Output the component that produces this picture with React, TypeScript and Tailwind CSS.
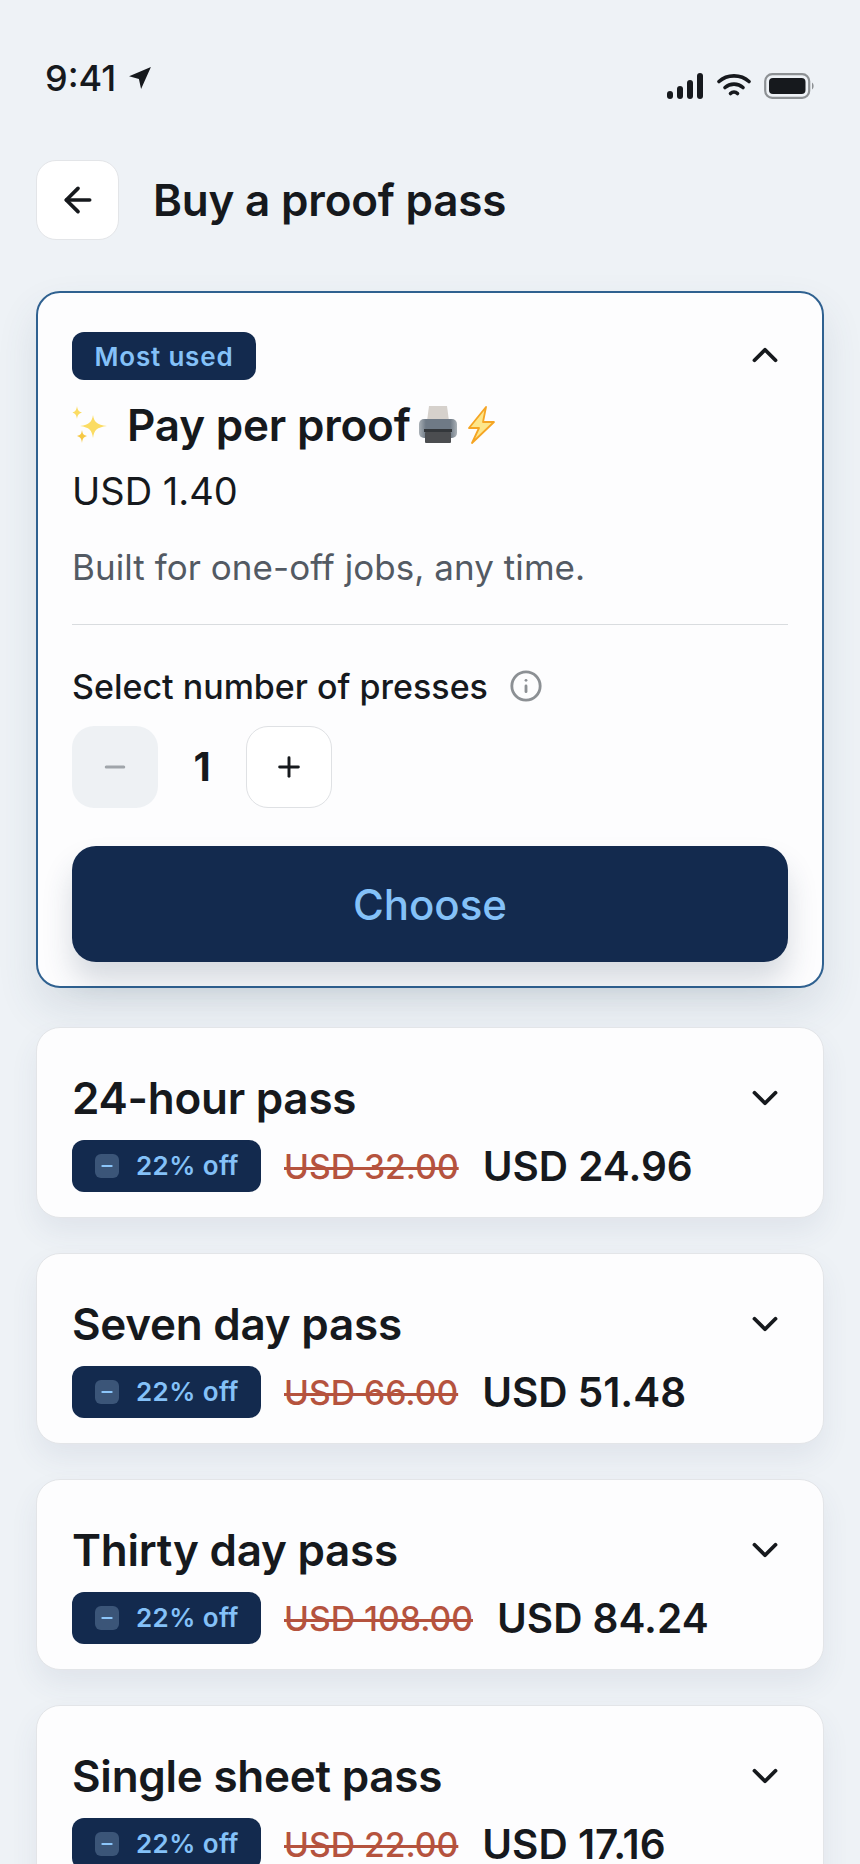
import { ArrowLeft, ChevronDown, ChevronUp, Info, Minus, Plus } from 'lucide-react';

const passes = [
  { name: '24-hour pass', was: 'USD 32.00', now: 'USD 24.96' },
  { name: 'Seven day pass', was: 'USD 66.00', now: 'USD 51.48' },
  { name: 'Thirty day pass', was: 'USD 108.00', now: 'USD 84.24' },
  { name: 'Single sheet pass', was: 'USD 22.00', now: 'USD 17.16' },
];

function StatusIcons() {
  return (
    <div className="flex items-end gap-[13px] mt-[18px]">
      <svg width="37" height="26" viewBox="0 0 37 26" fill="#16191d">
        <rect x="0" y="18" width="6" height="8" rx="3" />
        <rect x="10" y="13" width="6" height="13" rx="3" />
        <rect x="20" y="7" width="6" height="19" rx="3" />
        <rect x="30" y="0" width="6" height="26" rx="3" />
      </svg>
      <svg className="mb-[2px]" width="34" height="24" viewBox="0 0 34 24" fill="none" stroke="#16191d" strokeLinecap="round" strokeWidth="3.6">
        <path d="M2 8.5C10 1 24 1 32 8.5" />
        <path d="M8 14.5C13 10 21 10 26 14.5" />
        <path d="M13.5 20.5C15.5 18.5 18.5 18.5 20.5 20.5" />
      </svg>
      <svg width="50" height="26" viewBox="0 0 50 26" fill="none">
        <rect x="1.2" y="1.2" width="44" height="23.6" rx="7" stroke="#8d9194" strokeWidth="2.2" />
        <rect x="5" y="5" width="36.5" height="16" rx="4" fill="#16191d" />
        <path d="M48 9.5c1.2.8 1.6 2 1.6 3.5s-.4 2.7-1.6 3.5z" fill="#8d9194" />
      </svg>
    </div>
  );
}

function Sparkles() {
  return (
    <svg width="36" height="38" viewBox="0 0 36 38" fill="#fbdc63">
      <path d="M21 9c1.2 7 3.5 9.500 14 11-10.500 1.500-12.800 4-14 12-1.200-8-3.500-10.500-13-12 9.500-1.500 11.800-4 13-11z" />
      <path d="M5 0c.6 4 1.500 5.500 5 6.500-3.500 1-4.400 2.500-5 6.500-.6-4-1.500-5.500-4.500-6.500C3.500 5.500 4.400 4 5 0z" />
      <path d="M10 24c.6 4 1.500 5 5 6-3.500 1-4.400 2.500-5 7-.6-4.500-1.500-6-5-7 3.500-1 4.400-2 5-6z" fill="#f6c844" />
    </svg>
  );
}

function Printer() {
  return (
    <svg width="38" height="38" viewBox="0 0 38 38">
      <defs>
        <linearGradient id="printerBody" x1="0" y1="0" x2="1" y2="0">
          <stop offset="0" stopColor="#a9b0b6" />
          <stop offset="0.18" stopColor="#6f7a86" />
          <stop offset="0.82" stopColor="#6f7a86" />
          <stop offset="1" stopColor="#a9b0b6" />
        </linearGradient>
      </defs>
      <path d="M10 0h18l2 15H8z" fill="#d6d1cc" />
      <rect x="0" y="13" width="38" height="19" rx="5" fill="url(#printerBody)" />
      <rect x="5" y="23" width="28" height="3" fill="#33373b" />
      <rect x="6" y="26" width="26" height="11" rx="1" fill="#4b4d50" />
    </svg>
  );
}

function Bolt() {
  return (
    <svg width="28" height="38" viewBox="0 0 28 38" fill="#fde68a" stroke="#f5a524" strokeWidth="1.800" strokeLinejoin="round">
      <path d="M19 1 2 22h10L5 37l22-21H16z" />
    </svg>
  );
}

function PassCard({ name, was, now }: { name: string; was: string; now: string }) {
  return (
    <div className="bg-[#fdfdfe] border border-[#e3e5e8] rounded-[24px] h-[191px] px-[35px] pt-[47px] shadow-[0_14px_28px_rgba(60,80,110,0.08)]">
      <div className="flex items-start justify-between">
        <h2 className="text-[44px] leading-[46px] font-semibold tracking-[-0.25px] text-[#16191d]">{name}</h2>
        <ChevronDown className="w-[42px] h-[42px] text-[#16191d] mr-[2px] mt-[2px]" strokeWidth={2.2} />
      </div>
      <div className="flex items-center mt-[19px]">
        <div className="flex items-center w-[189px] h-[52px] rounded-[12px] bg-[#132a4e] pl-[23px]">
          <span className="flex items-center justify-center w-[24px] h-[24px] rounded-[6px] bg-[#3b5578]">
            <Minus className="w-[16px] h-[16px] text-[#8cc6fa]" strokeWidth={3} />
          </span>
          <span className="ml-[17px] text-[26px] tracking-[0.4px] font-semibold text-[#84c1f8] leading-none">22% off</span>
        </div>
        <span className="ml-[23px] mt-[2px] text-[33.7px] font-medium text-[#b5533e] line-through decoration-[3px] leading-none">{was}</span>
        <span className="ml-[24px] mt-[2px] text-[40.5px] font-semibold text-[#16191d] leading-none">{now}</span>
      </div>
    </div>
  );
}

export default function App() {
  return (
    <div className="w-[860px] h-[1864px] overflow-hidden bg-[#eef2f6] font-['Inter',sans-serif] text-[#16191d]">
      <div className="flex justify-between items-start pl-[45px] pr-[46px] pt-[55px] h-[161px]">
        <div className="flex items-center gap-[12px]">
          <span className="text-[36px] leading-[46px] font-medium">9:41</span>
          <svg width="24" height="24" viewBox="0 0 22 22" fill="#16191d">
            <path d="M21 1 1 9.500l9 2.500 2 9z" />
          </svg>
        </div>
        <StatusIcons />
      </div>

      <div className="flex items-center pl-[36px] h-[78px]">
        <button className="flex items-center justify-center w-[83px] h-[80px] rounded-[20px] bg-white border border-[#e3e5e8]">
          <ArrowLeft className="w-[40px] h-[40px] text-[#16191d]" strokeWidth={2.2} />
        </button>
        <h1 className="ml-[34px] text-[44px] font-semibold tracking-[-0.2px]">Buy a proof pass</h1>
      </div>

      <div className="flex flex-col gap-[35px] mx-[36px] mt-[52px]">
        <div className="bg-[#fdfdfe] border-2 border-[#2f6190] rounded-[24px] h-[697px] px-[34px] pt-[39px] mb-[4px] shadow-[0_20px_40px_rgba(60,80,110,0.12)]">
          <div className="flex items-start justify-between">
            <span className="flex items-center justify-center w-[184px] h-[48px] rounded-[12px] bg-[#132a4e] text-[#84c1f8] text-[26px] tracking-[0.8px] font-semibold">
              Most used
            </span>
            <ChevronUp className="w-[42px] h-[42px] text-[#16191d] mr-[2px] mt-[2px]" strokeWidth={2.2} />
          </div>
          <div className="flex items-center mt-[22px] h-[46px]">
            <Sparkles />
            <span className="ml-[19px] text-[44px] font-semibold tracking-[-0.2px]">Pay per proof</span>
            <span className="ml-[8px]"><Printer /></span>
            <span className="ml-[10px]"><Bolt /></span>
          </div>
          <div className="mt-[21px] text-[38px] leading-[44px]">USD 1.40</div>
          <p className="mt-[32px] text-[35px] tracking-[0.05px] leading-[44px] text-[#535a63]">Built for one-off jobs, any time.</p>
          <div className="mt-[35px] border-t border-[#d9dcdf]" />
          <div className="flex items-center mt-[39px] h-[44px]">
            <span className="text-[34px] font-medium">Select number of presses</span>
            <Info className="w-[34px] h-[34px] ml-[21px] text-[#8c9094]" strokeWidth={2} />
          </div>
          <div className="flex items-center mt-[18px]">
            <button className="flex items-center justify-center w-[86px] h-[82px] rounded-[22px] bg-[#eef1f4]">
              <Minus className="w-[30px] h-[30px] text-[#a0a5aa]" strokeWidth={2.4} />
            </button>
            <span className="w-[88px] text-center text-[40px] font-bold">1</span>
            <button className="flex items-center justify-center w-[86px] h-[82px] rounded-[22px] bg-white border border-[#dfe1e4]">
              <Plus className="w-[32px] h-[32px] text-[#16191d]" strokeWidth={2.2} />
            </button>
          </div>
          <button className="mt-[38px] w-full h-[116px] rounded-[24px] bg-[#132a4e] text-[#84c1f8] text-[42px] font-medium shadow-[0_20px_30px_rgba(40,60,90,0.18)]">
            Choose
          </button>
        </div>

        {passes.map((p) => (
          <PassCard key={p.name} {...p} />
        ))}
      </div>
    </div>
  );
}
